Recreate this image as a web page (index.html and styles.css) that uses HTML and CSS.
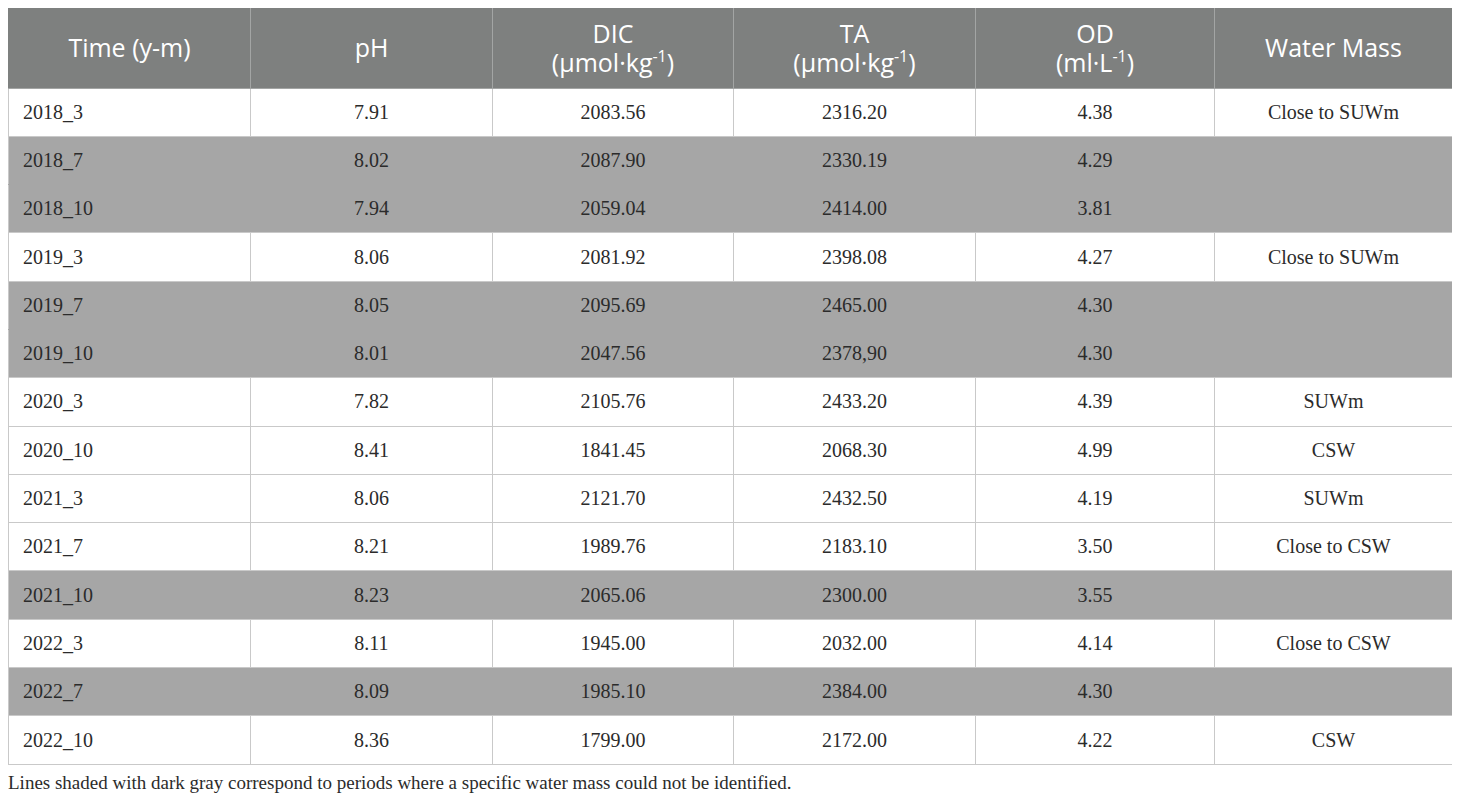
FILE: index.html
```html
<!DOCTYPE html>
<html lang="en">
<head>
  <meta charset="UTF-8" />
  <title>Carbonate system parameters</title>
  <link rel="stylesheet" href="styles.css">
</head>
<body>

<table class="data-table">
  <colgroup>
    <col class="col-time">
    <col class="col-ph">
    <col class="col-dic">
    <col class="col-ta">
    <col class="col-od">
    <col class="col-mass">
  </colgroup>
  <thead>
    <tr>
      <th>Time (y-m)</th>
      <th>pH</th>
      <th>DIC<br>(µmol·kg<sup>-1</sup>)</th>
      <th>TA<br>(µmol·kg<sup>-1</sup>)</th>
      <th>OD<br>(ml·L<sup>-1</sup>)</th>
      <th>Water Mass</th>
    </tr>
  </thead>
  <tbody>
    <tr><td>2018_3</td><td>7.91</td><td>2083.56</td><td>2316.20</td><td>4.38</td><td>Close to SUWm</td></tr>
    <tr class="shaded"><td>2018_7</td><td>8.02</td><td>2087.90</td><td>2330.19</td><td>4.29</td><td></td></tr>
    <tr class="shaded"><td>2018_10</td><td>7.94</td><td>2059.04</td><td>2414.00</td><td>3.81</td><td></td></tr>
    <tr><td>2019_3</td><td>8.06</td><td>2081.92</td><td>2398.08</td><td>4.27</td><td>Close to SUWm</td></tr>
    <tr class="shaded"><td>2019_7</td><td>8.05</td><td>2095.69</td><td>2465.00</td><td>4.30</td><td></td></tr>
    <tr class="shaded"><td>2019_10</td><td>8.01</td><td>2047.56</td><td>2378,90</td><td>4.30</td><td></td></tr>
    <tr><td>2020_3</td><td>7.82</td><td>2105.76</td><td>2433.20</td><td>4.39</td><td>SUWm</td></tr>
    <tr><td>2020_10</td><td>8.41</td><td>1841.45</td><td>2068.30</td><td>4.99</td><td>CSW</td></tr>
    <tr><td>2021_3</td><td>8.06</td><td>2121.70</td><td>2432.50</td><td>4.19</td><td>SUWm</td></tr>
    <tr><td>2021_7</td><td>8.21</td><td>1989.76</td><td>2183.10</td><td>3.50</td><td>Close to CSW</td></tr>
    <tr class="shaded"><td>2021_10</td><td>8.23</td><td>2065.06</td><td>2300.00</td><td>3.55</td><td></td></tr>
    <tr><td>2022_3</td><td>8.11</td><td>1945.00</td><td>2032.00</td><td>4.14</td><td>Close to CSW</td></tr>
    <tr class="shaded"><td>2022_7</td><td>8.09</td><td>1985.10</td><td>2384.00</td><td>4.30</td><td></td></tr>
    <tr><td>2022_10</td><td>8.36</td><td>1799.00</td><td>2172.00</td><td>4.22</td><td>CSW</td></tr>
  </tbody>
</table>

<p class="caption">Lines shaded with dark gray correspond to periods where a specific water mass could not be identified.</p>

</body>
</html>
```

FILE: styles.css
```css
* { box-sizing: border-box; }
body {
  margin: 8px;
  background: #fff;
  color: #2b2b2b;
  font-family: 'Liberation Serif', 'Times New Roman', serif;
}

.data-table {
  width: 1444px;
  table-layout: fixed;
  border-collapse: collapse;
}

.col-time { width: 242px; }
.col-ph { width: 242px; }
.col-dic { width: 241px; }
.col-ta { width: 242px; }
.col-od { width: 239px; }
.col-mass { width: 238px; }

.data-table th {
  height: 80px;
  background: #7e807f;
  color: #fff;
  font-family: 'Open Sans', sans-serif;
  font-weight: 400;
  font-size: 25px;
  line-height: 29px;
  text-align: center;
  border: 1px solid #a3a5a4;
  border-top: none;
  padding: 0 6px;
}

.data-table th:first-child { border-left: 1px solid #7e807f; }
.data-table th:last-child { border-right: 1px solid #7e807f; }

.data-table th sup {
  font-size: 16px;
  line-height: 0;
  vertical-align: 10px;
}

.data-table td {
  height: 48.3px;
  padding: 0 14px;
  font-size: 20px;
  text-align: center;
  border: 1px solid #c9c9c9;
}

.data-table td:first-child { text-align: left; }

.data-table tr.shaded td {
  background: #a6a6a6;
  border-left-color: #a6a6a6;
  border-right-color: #a6a6a6;
}

.data-table tr.shaded td:first-child { border-left-color: #c9c9c9; }
.data-table tr.shaded td:last-child { border-right-color: #c9c9c9; }
.data-table tr.shaded:has(+ tr.shaded) td { border-bottom-color: #a6a6a6; }
.data-table tr.shaded + tr.shaded td { border-top-color: #a6a6a6; }

.caption {
  margin: 7px 0 0;
  font-size: 19px;
  color: #2b2b2b;
}
```
